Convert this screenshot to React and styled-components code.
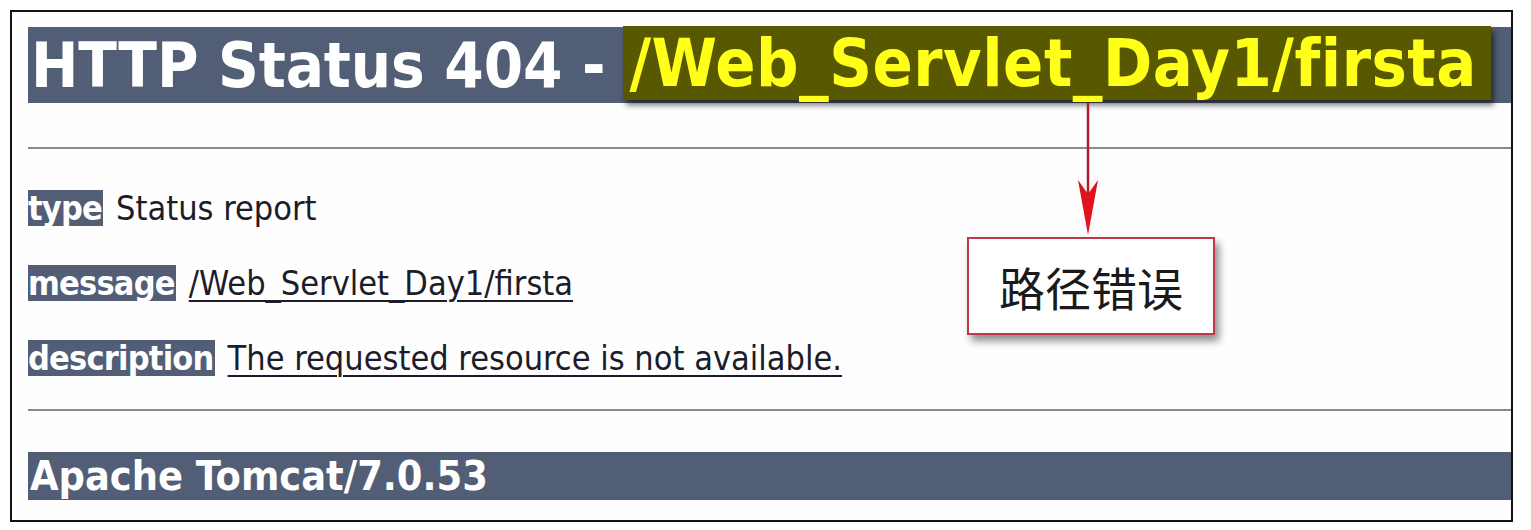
import styled, { createGlobalStyle } from 'styled-components';

const GlobalStyle = createGlobalStyle`
  html, body {
    margin: 0;
    padding: 0;
    background: #ffffff;
  }
  body {
    width: 1531px;
    height: 530px;
    overflow: hidden;
  }
`;

export default function App() {
  return (
    <>
      <GlobalStyle />
      <Page>
        <Frame>
          <TitleBar>
            <TitleText>HTTP Status 404 -</TitleText>
            <PathMark>/Web_Servlet_Day1/firsta</PathMark>
          </TitleBar>
          <Rule />
          <InfoList>
            <InfoRow>
              <Label>type</Label>
              <Value>Status report</Value>
            </InfoRow>
            <InfoRow>
              <Label>message</Label>
              <Value $underline>/Web_Servlet_Day1/firsta</Value>
            </InfoRow>
            <InfoRow>
              <Label>description</Label>
              <Value $underline>The requested resource is not available.</Value>
            </InfoRow>
          </InfoList>
          <Rule />
          <FooterBar>Apache Tomcat/7.0.53</FooterBar>

          <Arrow width="24" height="134" viewBox="0 0 24 134">
            <line x1="12" y1="0" x2="12" y2="92" stroke="#b8192b" strokeWidth="2.5" />
            <path d="M2 77 L12 91 L22 77 L12 132 Z" fill="#e0121c" />
          </Arrow>
          <Callout>路径错误</Callout>
        </Frame>
      </Page>
    </>
  );
}

const Page = styled.div`
  padding: 10px 18px 8px 10px;
`;

const Frame = styled.div`
  position: relative;
  height: 512px;
  border: 2px solid #111;
  background: #fefefe;
  padding: 15px 0 0 16px;
  box-sizing: border-box;
`;

const TitleBar = styled.h1`
  margin: 0;
  height: 76px;
  background: #525d76;
  color: #ffffff;
  white-space: nowrap;
  display: flex;
  align-items: center;
`;

const TitleText = styled.span`
  padding-left: 3px;
  font-family: 'DejaVu Sans Condensed', 'DejaVu Sans', sans-serif;
  font-weight: bold;
  font-size: 63px;
  letter-spacing: -0.1px;
`;

const PathMark = styled.span`
  margin-left: 18px;
  height: 74px;
  margin-top: -4px;
  display: inline-flex;
  align-items: center;
  padding: 0 14px 0 6px;
  background: #585800;
  color: #ffff1a;
  font-family: 'DejaVu Sans Condensed', 'DejaVu Sans', sans-serif;
  font-weight: bold;
  font-size: 66px;
  letter-spacing: 0.5px;
  box-shadow: 3px 5px 6px rgba(0, 0, 0, 0.55);
`;

const Rule = styled.hr`
  margin: 44px 0 0;
  border: none;
  height: 2px;
  background: #8a8a8a;
`;

const InfoList = styled.div`
  display: flex;
  flex-direction: column;
  gap: 35px;
  padding-top: 39px;
  padding-bottom: 31px;
  & + hr {
    margin-top: 0;
  }
`;

const InfoRow = styled.div`
  display: flex;
  align-items: center;
  gap: 13px;
  height: 40px;
  font-family: 'DejaVu Sans Condensed', 'DejaVu Sans', sans-serif;
  font-size: 34px;
  color: #1c1c2a;
  white-space: nowrap;
`;

const Label = styled.span`
  display: inline-block;
  height: 36px;
  line-height: 36px;
  background: #525d76;
  color: #ffffff;
  font-weight: bold;
  letter-spacing: -0.8px;
  padding-right: 1px;
`;

const Value = styled.span`
  text-decoration: ${props => (props.$underline ? 'underline' : 'none')};
  text-decoration-thickness: 2px;
  text-underline-offset: 5px;
`;

const FooterBar = styled.div`
  margin-top: 41px;
  height: 48px;
  background: #525d76;
  color: #ffffff;
  font-family: 'DejaVu Sans Condensed', 'DejaVu Sans', sans-serif;
  font-weight: bold;
  font-size: 41px;
  line-height: 48px;
  padding-left: 2px;
  letter-spacing: 0;
`;

const Arrow = styled.svg`
  position: absolute;
  left: 1064px;
  top: 91px;
`;

const Callout = styled.div`
  position: absolute;
  left: 955px;
  top: 225px;
  width: 248px;
  height: 98px;
  box-sizing: border-box;
  border: 2px solid #c0394b;
  background: #ffffff;
  box-shadow: 4px 6px 8px rgba(0, 0, 0, 0.45);
  display: flex;
  align-items: center;
  justify-content: center;
  font-family: 'Noto Sans CJK SC', sans-serif;
  font-size: 46px;
  color: #1a1a1a;
`;
